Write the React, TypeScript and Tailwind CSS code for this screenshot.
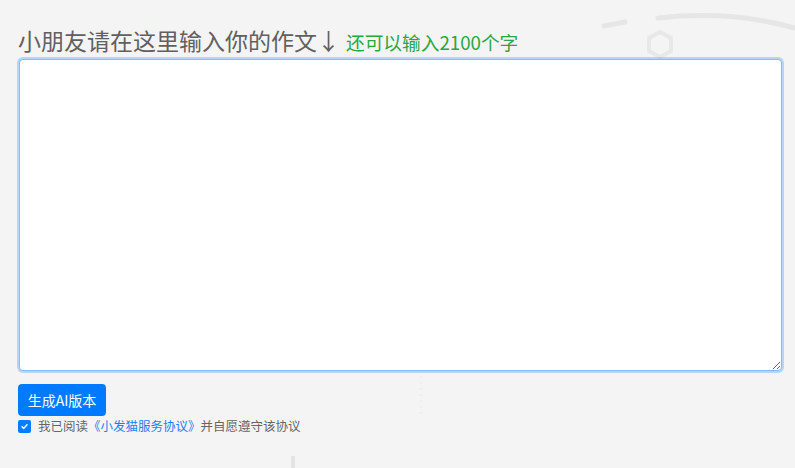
export default function App() {
  return (
    <div
      className="relative min-h-[468px] w-full overflow-hidden bg-[#f4f4f4]"
      style={{ fontFamily: '"Noto Sans CJK SC", "Noto Sans", sans-serif' }}
    >
      {/* faint background decoration */}
      <svg className="pointer-events-none absolute left-0 top-0" width="795" height="468">
        <path d="M604 26 L625 22" stroke="#e6e6e6" strokeWidth="5" strokeLinecap="round" fill="none" />
        <path d="M658 18 Q730 10 795 28" stroke="#e6e6e6" strokeWidth="5" strokeLinecap="round" fill="none" />
        <polygon points="660,32 671,38 671,51 660,57 649,51 649,38" stroke="#e8e8e8" strokeWidth="4" fill="none" />
        <path d="M421 376 L421 416" stroke="#efefef" strokeWidth="3" strokeDasharray="2 4" fill="none" />
        <path d="M293 456 L293 468" stroke="#e4e4e4" strokeWidth="4" fill="none" />
      </svg>

      <div className="relative pl-[18px] pr-[12px] pt-[29px]">
        <div className="flex items-end leading-none">
          <span className="text-[23px] text-[#606060]">小朋友请在这里输入你的作文↓</span>
          <span className="ml-[6px] text-[18.7px] text-[#28a745]">还可以输入2100个字</span>
        </div>

        <textarea
          autoFocus
          className="mt-[7px] ml-px block h-[312px] w-[763px] resize-y rounded-[4px] border border-[#80bdff] bg-white px-[10px] py-[6px] text-[14px] text-[#495057] caret-[#333] shadow-[0_0_0_2px_rgba(0,123,255,0.25)] outline-none"
        />

        <button className="mt-[13px] flex h-[32px] w-[88px] items-center justify-center rounded-[4px] bg-[#007bff] text-[14px] text-white">
          生成AI版本
        </button>

        <label className="mt-[1px] flex items-center text-[12.5px] leading-[18px] text-[#666666]">
          <span className="flex h-[13px] w-[13px] items-center justify-center rounded-[2px] bg-[#0a7cff]">
            <svg width="9" height="9" viewBox="0 0 10 10">
              <path d="M2.2 5.2 L4.2 7.1 L7.8 3" stroke="white" strokeWidth="1.6" fill="none" strokeLinecap="round" strokeLinejoin="round" />
            </svg>
          </span>
          <span className="ml-[7px]">
            我已阅读<span className="text-[#1e7ef5]">《小发猫服务协议》</span>并自愿遵守该协议
          </span>
        </label>
      </div>
    </div>
  );
}
